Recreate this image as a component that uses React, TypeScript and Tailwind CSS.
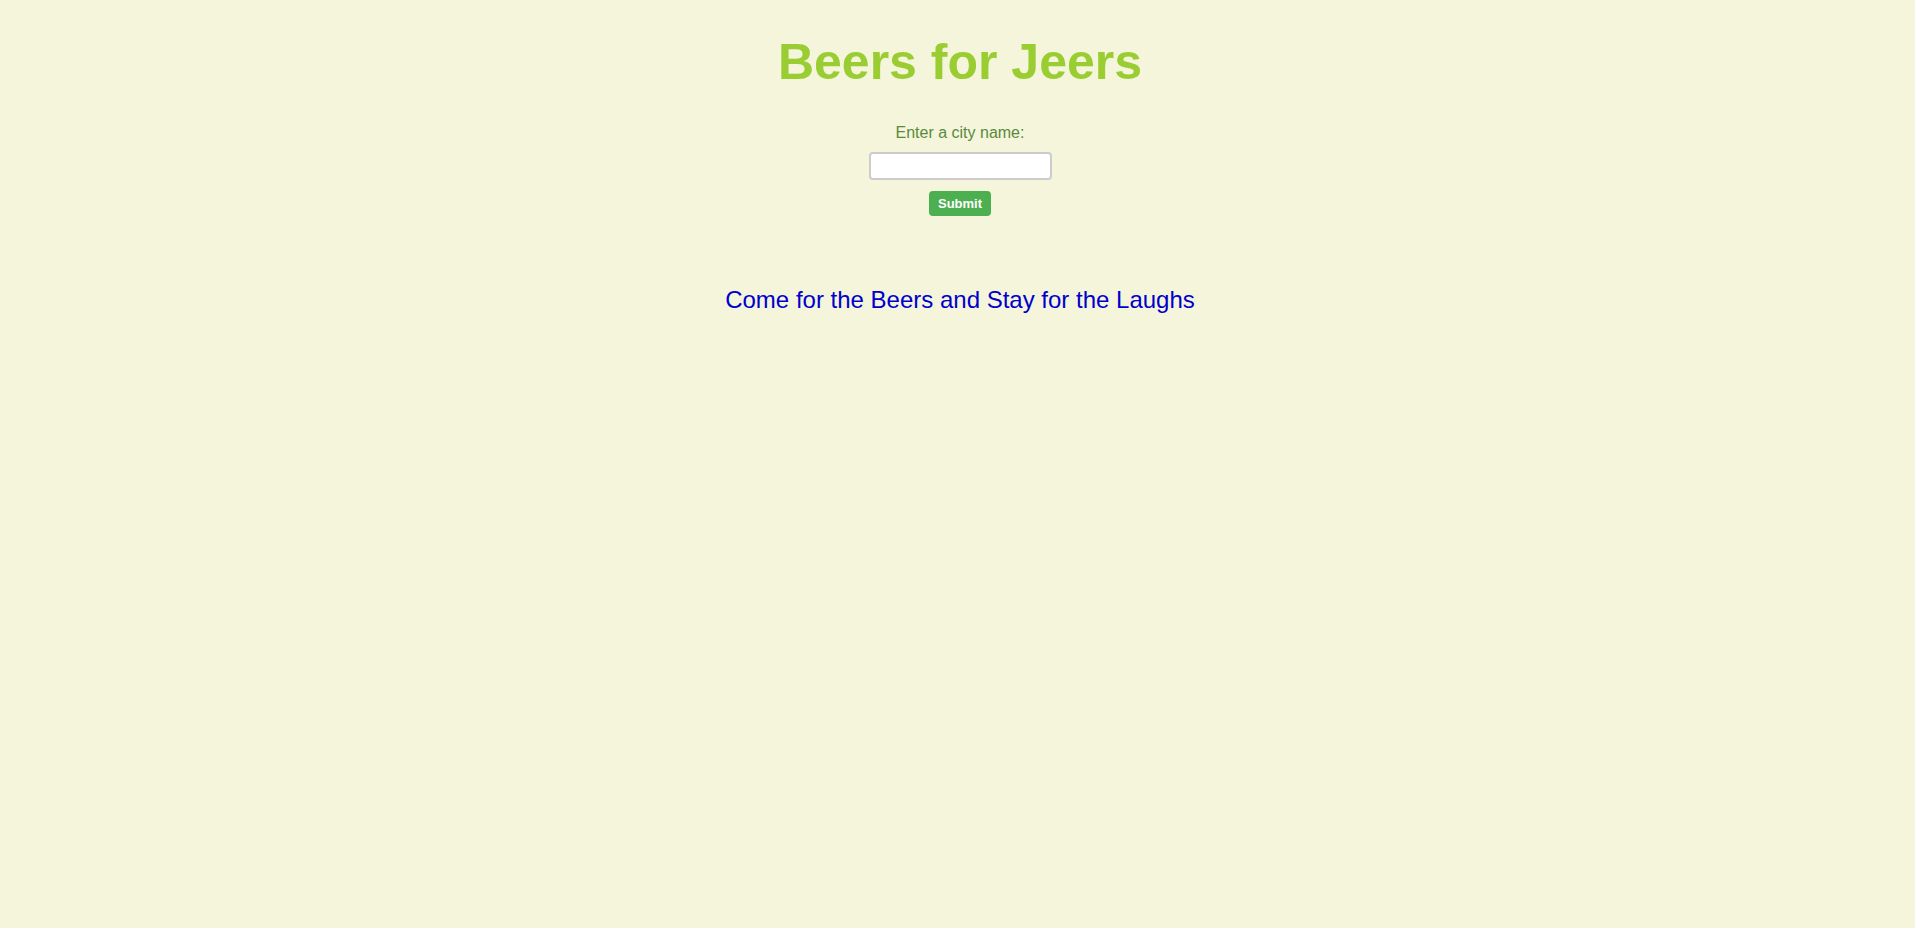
const App = () => {
  return (
    <div className="min-h-screen w-full bg-[#f5f5dc] pl-[5px] text-center font-['Liberation_Sans',Arial,sans-serif]">
      <h1 className="pt-[34px] text-[50px] font-bold leading-[56px] text-[#9acd32]">
        Beers for Jeers
      </h1>
      <form
        className="mt-[33px] flex flex-col items-center"
        onSubmit={(e) => e.preventDefault()}
      >
        <label htmlFor="city" className="text-[16px] leading-[20px] text-[#5a8a3c]">
          Enter a city name:
        </label>
        <input
          id="city"
          type="text"
          className="mt-[9px] h-[28px] w-[183px] rounded-[4px] border-2 border-[#cccccc] bg-white px-2"
        />
        <button
          type="submit"
          className="mt-[11px] h-[25px] w-[62px] rounded-[4px] bg-[#4caf50] text-[13px] font-semibold text-white"
        >
          Submit
        </button>
      </form>
      <p className="mt-[70px] text-[24px] leading-[28px] text-[#0000cd]">
        Come for the Beers and Stay for the Laughs
      </p>
    </div>
  );
};

export default App;
